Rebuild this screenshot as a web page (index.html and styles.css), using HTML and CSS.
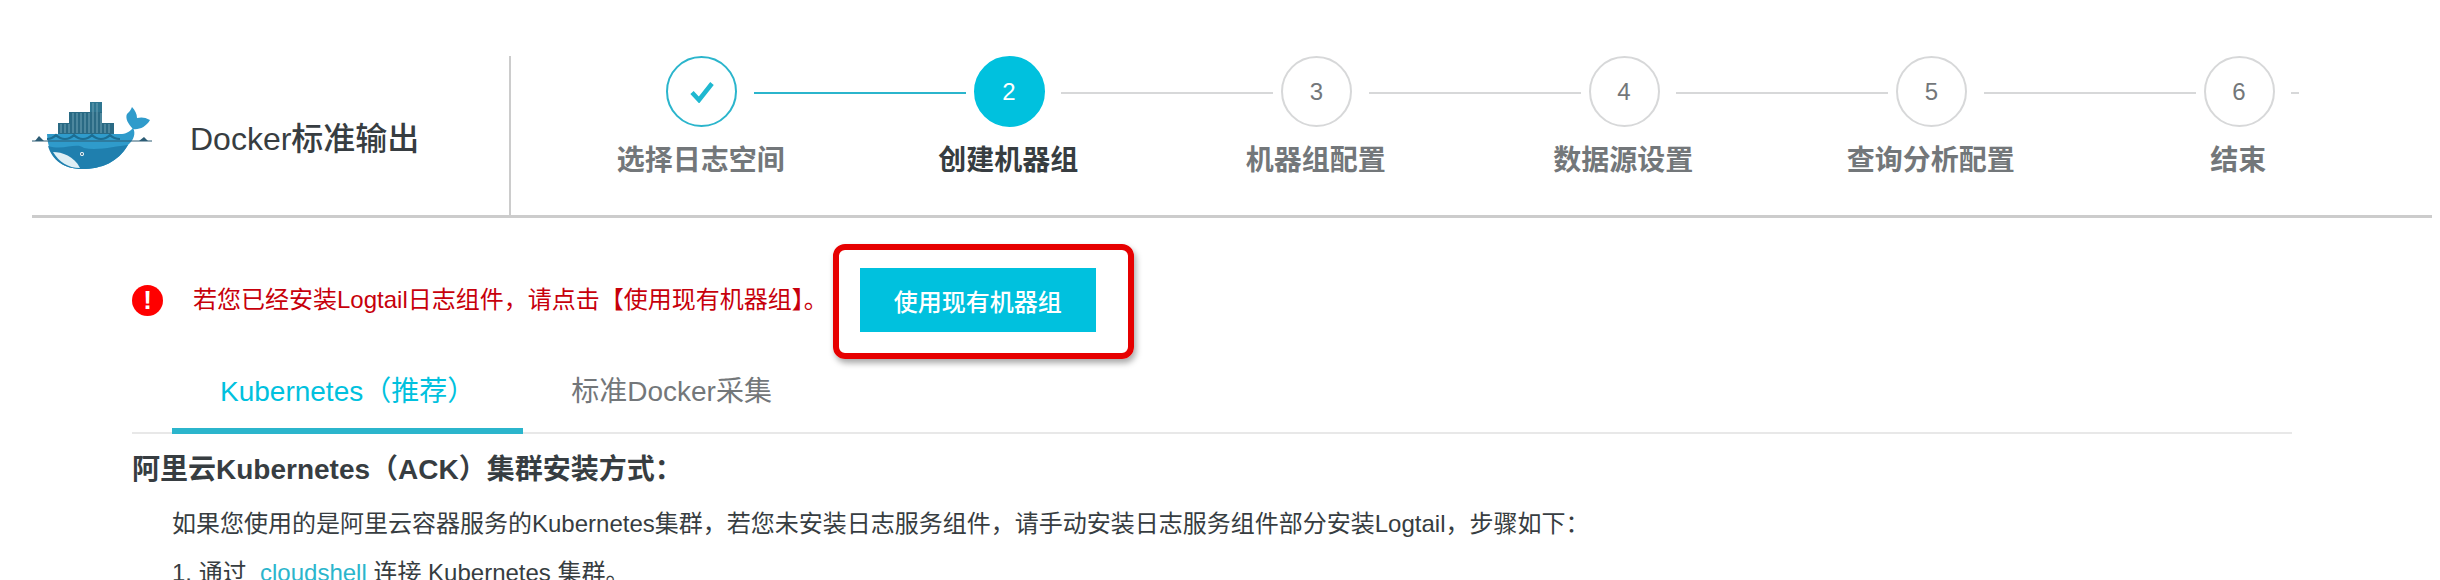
FILE: index.html
```html
<!DOCTYPE html>
<html lang="zh-CN">
<head>
  <meta charset="UTF-8">
  <meta name="viewport" content="width=device-width, initial-scale=1.0">
  <title>Docker标准输出</title>
  <link rel="stylesheet" href="styles.css">
</head>
<body>
  <header class="wizard-header">
    <div class="brand">
      <svg class="brand-logo" viewBox="0 0 120 68" aria-hidden="true">
        <!-- containers -->
        <rect x="26" y="21" width="56" height="11" fill="#2a6a84"/>
        <rect x="37" y="10" width="33" height="11" fill="#2a6a84"/>
        <rect x="58" y="0" width="12" height="10" fill="#2f7691"/>
        <path d="M29 22v9M33 22v9M37 22v9M41 11v20M45 11v20M49 11v20M53 11v20M57 11v20M61 1v30M65 1v30M69 11v20M73 22v9M77 22v9" stroke="#6ea3b6" stroke-width="1" fill="none"/>
        <!-- hull -->
        <path d="M15 32H88C94 32 97 30 101 26C104 31 102 38 96 43C86 60 70 67 50 67C30 67 16 56 15 32Z" fill="#2f9bcb"/>
        <path d="M16 44C32 49 44 40 52 46C66 49 84 44 96 43C86 60 70 67 50 67C32 67 20 58 16 44Z" fill="#1f7fae"/>
        <path d="M21 50C30 50 42 54 48 66C36 66 27 60 21 50Z" fill="#dfeff5"/>
        <path d="M15 37Q20 37 24 33Q28 37 33 37Q38 37 42 33Q46 37 51 37Q56 37 60 33Q64 37 69 37Q74 37 78 33Q82 37 88 37" fill="none" stroke="#1c6e93" stroke-width="2"/>
        <!-- tail -->
        <path d="M101 27C96 22 93 16 95 12C97 10 99 8 100 5C103 8 105 12 105 16C109 15 113 15 118 18C114 25 107 28 101 27Z" fill="#2f9bcb"/>
        <!-- water line -->
        <path d="M0 39H120" stroke="#2c5c75" stroke-width="1.2"/>
        <path d="M3 39L7 34L12 39ZM107 39L112 35L116 39Z" fill="#2c5c75"/>
        <circle cx="50" cy="52" r="2" fill="#fff"/>
        <circle cx="50" cy="52" r="1" fill="#1c5c7d"/>
      </svg>
      <h1 class="brand-title">Docker标准输出</h1>
    </div>
    <div class="steps">
      <div class="step-track">
        <span class="step-dot done">
          <svg viewBox="0 0 24 22" aria-hidden="true"><path d="M2 11.5L9 19L22 2.5" fill="none" stroke="#1fb8d0" stroke-width="4.5"/></svg>
        </span>
        <span class="step-line done"></span>
        <span class="step-dot active">2</span>
        <span class="step-line"></span>
        <span class="step-dot">3</span>
        <span class="step-line"></span>
        <span class="step-dot">4</span>
        <span class="step-line"></span>
        <span class="step-dot">5</span>
        <span class="step-line"></span>
        <span class="step-dot">6</span>
        <span class="step-line tail"></span>
      </div>
      <div class="step-labels">
        <span>选择日志空间</span>
        <span class="active">创建机器组</span>
        <span>机器组配置</span>
        <span>数据源设置</span>
        <span>查询分析配置</span>
        <span>结束</span>
      </div>
    </div>
  </header>

  <main class="content">
    <div class="notice">
      <span class="notice-icon">!</span>
      <span class="notice-text">若您已经安装Logtail日志组件，请点击【使用现有机器组】。</span>
      <div class="highlight">
        <button class="btn-primary" type="button">使用现有机器组</button>
      </div>
    </div>

    <div class="tabs">
      <a class="tab active">Kubernetes（推荐）</a>
      <a class="tab">标准Docker采集</a>
    </div>

    <h2 class="section-title">阿里云Kubernetes（ACK）集群安装方式：</h2>
    <p class="section-desc">如果您使用的是阿里云容器服务的Kubernetes集群，若您未安装日志服务组件，请手动安装日志服务组件部分安装Logtail，步骤如下：</p>
    <p class="section-step">1. 通过 &nbsp;<a class="link">cloudshell</a> 连接 Kubernetes 集群。</p>
  </main>
</body>
</html>
```

FILE: styles.css
```css
*, *::before, *::after { box-sizing: border-box; }
html, body { height: 580px; overflow: hidden; }
body { margin: 0; background-color: #fff; color: #373d41; font-family: "Liberation Sans", "Noto Sans CJK SC", sans-serif; }

/* header */
.wizard-header { display: flex; height: 218px; margin: 0 8px 0 32px; padding-top: 56px; border-bottom: 3px solid #ccc; }
.brand { display: flex; align-items: center; width: 479px; border-right: 2px solid #ccc; }
.brand-logo { width: 120px; height: 68px; flex-shrink: 0; }
.brand-title { margin: 0 0 0 38px; font-size: 32px; font-weight: 500; white-space: nowrap; }

/* steps */
.steps { margin-left: 36px; }
.step-track { display: flex; align-items: center; margin-left: 119px; }
.step-dot { display: flex; align-items: center; justify-content: center; width: 71px; height: 71px; flex-shrink: 0; border: 2px solid #d7d8d9; border-radius: 50%; color: #73777a; font-size: 24px; }
.step-dot svg { width: 24px; height: 22px; }
.step-dot.done { border-color: #2bb5cc; }
.step-dot.active { background-color: #00c1de; border-color: #00c1de; color: #fff; }
.step-line { width: 212px; height: 2px; margin: 2px 8px 0 16.5px; background-color: #d7d8d9; }
.step-line.done { background-color: #2bb5cc; }
.step-line.tail { width: 8px; }
.step-labels { display: grid; grid-template-columns: repeat(6, 307.5px); margin-top: 14px; }
.step-labels span { color: #73777a; font-size: 28px; font-weight: 700; line-height: 40px; text-align: center; }
.step-labels span.active { color: #373d41; }

/* content */
.content { padding-left: 132px; }
.notice { display: flex; align-items: flex-start; margin-top: 26px; }
.notice-icon { display: flex; align-items: center; justify-content: center; width: 31px; height: 31px; margin-top: 41px; flex-shrink: 0; border-radius: 50%; background-color: #f00; color: #fff; font-size: 26px; font-weight: 700; }
.notice-text { margin: 36px 0 0 30px; color: #c7000b; font-size: 24px; line-height: 40px; white-space: nowrap; }
.highlight { margin-left: 5px; padding: 18px 32px 21px 21px; border: 6px solid #e60000; border-radius: 12px; box-shadow: 2px 4px 6px rgba(0,0,0,0.35); }
.btn-primary { display: block; width: 236px; height: 64px; padding: 0; border: none; background-color: #00c1de; color: #fff; font-family: inherit; font-size: 24px; font-weight: 500; }

/* tabs */
.tabs { display: flex; width: 2160px; margin-top: 1px; border-bottom: 2px solid #e8e8e8; }
.tab { height: 74px; margin-bottom: -2px; padding: 0 48px; border-bottom: 6px solid transparent; color: #73777a; font-size: 28px; line-height: 64px; white-space: nowrap; }
.tab:first-child { margin-left: 40px; }
.tab.active { border-bottom-color: #2bb5cc; color: #00c1de; }

/* body text */
.section-title { margin: 16px 0 0; font-size: 28px; font-weight: 700; line-height: 40px; white-space: nowrap; }
.section-desc { margin: 14px 0 0 40px; font-size: 24px; line-height: 40px; white-space: nowrap; }
.section-step { margin: 9px 0 0 40px; font-size: 24px; line-height: 40px; white-space: nowrap; }
.link { color: #2bb5cc; }
```
